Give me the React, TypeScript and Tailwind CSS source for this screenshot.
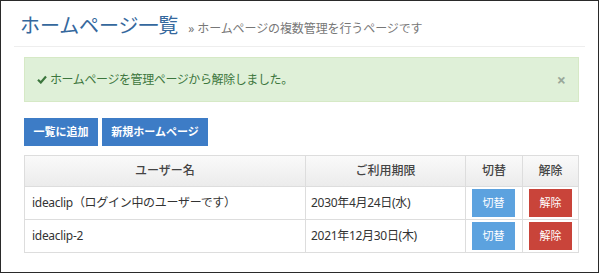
const FONT = { fontFamily: '"Noto Sans", "Noto Sans CJK JP", sans-serif' };

const ROWS = [
  { name: "ideaclip（ログイン中のユーザーです）", limit: "2030年4月24日(水)" },
  { name: "ideaclip-2", limit: "2021年12月30日(木)" },
];

export default function App() {
  return (
    <div className="w-[600px] h-[274px] bg-white" style={FONT}>
      <div className="w-[599px] h-[273px] border border-[#2a2a2a] bg-white px-[13px]">
        {/* 見出し */}
        <div className="flex items-end h-[46px] pl-[6px] pb-[10px] border-b border-[#eeeeee]">
          <h1 className="text-[20px] leading-none text-[#35689d] tracking-[-0.1px]">ホームページ一覧</h1>
          <span className="ml-[10px] text-[12px] leading-none text-[#777] tracking-[-0.1px] mb-[1px]">
            » ホームページの複数管理を行うページです
          </span>
        </div>

        <div className="pl-[10px] pr-[6px]">
          {/* アラート */}
          <div className="mt-[10px] h-[45px] flex items-center justify-between bg-[#dff0d8] border border-[#d6e9c6] pl-[12px] pr-[12px]">
            <span className="flex items-center text-[12px] text-[#3c763d] tracking-[-0.4px]">
              <svg width="10" height="9" viewBox="0 0 10 9" className="mr-[3px]">
                <path d="M1 4.8 L3.8 7.5 L9 1.5" fill="none" stroke="#3c763d" strokeWidth="2.2" />
              </svg>
              ホームページを管理ページから解除しました。
            </span>
            <span className="text-[16px] font-bold leading-none text-[#9aa89a]">×</span>
          </div>

          {/* ボタン */}
          <div className="mt-[16px] flex gap-[4px]">
            <button className="h-[28px] w-[74px] bg-[#3d7cc6] text-white text-[11px] font-bold">一覧に追加</button>
            <button className="h-[28px] w-[106px] bg-[#3d7cc6] text-white text-[11px] font-bold">新規ホームページ</button>
          </div>

          {/* テーブル */}
          <table className="mt-[9px] w-full border-collapse text-[12px] text-[#333]">
            <thead>
              <tr className="h-[31px] bg-gradient-to-b from-[#fafafa] to-[#ebebeb] text-[#444]">
                <th className="border border-[#dddddd] font-medium w-[281px]">ユーザー名</th>
                <th className="border border-[#dddddd] font-medium w-[160px]">ご利用期限</th>
                <th className="border border-[#dddddd] font-medium w-[57px]">切替</th>
                <th className="border border-[#dddddd] font-medium">解除</th>
              </tr>
            </thead>
            <tbody>
              {ROWS.map((r) => (
                <tr key={r.name} className="h-[33px]">
                  <td className="border border-[#dddddd] pl-[7px] tracking-[-0.3px]">{r.name}</td>
                  <td className="border border-[#dddddd] pl-[5px] tracking-[-0.3px]">{r.limit}</td>
                  <td className="border border-[#dddddd] px-[6px]">
                    <div className="h-[28px] w-[43px] bg-[#5ca2df] text-white text-[11px] flex items-center justify-center">切替</div>
                  </td>
                  <td className="border border-[#dddddd] px-[6px]">
                    <div className="h-[28px] w-[43px] bg-[#c9443a] text-white text-[11px] flex items-center justify-center">解除</div>
                  </td>
                </tr>
              ))}
            </tbody>
          </table>
        </div>
      </div>
    </div>
  );
}
